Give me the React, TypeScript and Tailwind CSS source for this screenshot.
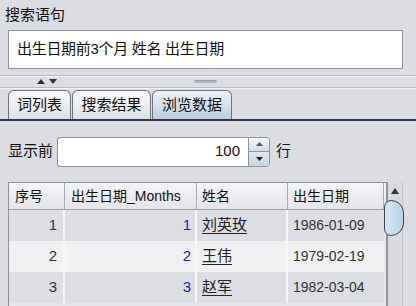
import React from "react";

const font = { fontFamily: '"Liberation Sans", "Noto Sans CJK SC", sans-serif' };

const rows = [
  { n: 1, m: 1, name: "刘英玫", date: "1986-01-09", bg: "bg-[#dcdee4]" },
  { n: 2, m: 2, name: "王伟", date: "1979-02-19", bg: "bg-[#f1f1f3]" },
  { n: 3, m: 3, name: "赵军", date: "1982-03-04", bg: "bg-[#dcdee4]" },
];

function Tab({ label, width, selected }: { label: string; width: number; selected?: boolean }) {
  return (
    <div
      className={
        "h-[29px] flex items-center justify-center border border-b-0 border-[#6f737c] rounded-t-[6px] text-[15px] text-[#111] " +
        (selected
          ? "bg-gradient-to-b from-[#eef3f8] to-[#bccfe0]"
          : "bg-gradient-to-b from-[#fafafb] to-[#dfe1e6]")
      }
      style={{ width }}
    >
      {label}
    </div>
  );
}

export default function App() {
  return (
    <div className="w-[416px] h-[306px] overflow-hidden bg-[#dcdde3] flex flex-col" style={font}>
      <div className="h-[30px] pl-[5px] pt-[5px] text-[15px] leading-[20px] text-[#111]">搜索语句</div>
      <div className="mx-[8px] mr-[13px] h-[39px] bg-white border border-[#8f9299] flex items-center pl-[8px] text-[15px] text-[#111] tracking-[-0.3px]">
        出生日期前3个月 姓名 出生日期
      </div>
      <div className="mt-[6px] h-[1px] bg-[#b9bbc2]" />
      <div className="h-[1px] bg-[#f3f3f5]" />
      <div className="h-[10px] relative">
        <div className="absolute left-[37px] top-[2px] flex gap-[4px]">
          <svg width="8" height="5" viewBox="0 0 8 5"><path d="M0 5 L4 0 L8 5 Z" fill="#333" /></svg>
          <svg width="8" height="5" viewBox="0 0 8 5"><path d="M0 0 L4 5 L8 0 Z" fill="#333" /></svg>
        </div>
        <div className="absolute left-[194px] top-[3px] w-[23px] h-[3px] rounded-[2px] bg-[#b5b7be] border-t border-[#9a9ca4]" />
      </div>
      <div className="h-[1px] bg-[#b9bbc2]" />
      <div className="h-[1px] bg-[#f3f3f5]" />
      <div className="mt-[1px] pl-[8px] flex gap-[1px]">
        <Tab label="词列表" width={63} />
        <Tab label="搜索结果" width={79} />
        <Tab label="浏览数据" width={80} selected />
      </div>
      <div className="h-[2px] bg-[#2f3a52]" />
      <div className="flex-1 flex flex-col">
        <div className="mt-[15px] h-[31px] flex items-center pl-[8px]">
          <span className="text-[15px] text-[#111] w-[49px]">显示前</span>
          <div className="w-[191px] h-[30px] bg-white border border-[#8f9299] border-r-0 rounded-l-[3px] flex items-center justify-end pr-[8px] text-[15px] text-[#111]">
            100
          </div>
          <div className="w-[22px] h-[30px] border border-[#8f9299] rounded-r-[4px] flex flex-col overflow-hidden">
            <div className="flex-1 flex items-center justify-center bg-gradient-to-b from-[#f4f7fa] to-[#d3dde7] border-b border-[#8f9299]">
              <svg width="7" height="4" viewBox="0 0 7 4"><path d="M0 4 L3.5 0 L7 4 Z" fill="#555" /></svg>
            </div>
            <div className="flex-1 flex items-center justify-center bg-gradient-to-b from-[#dfe7ef] to-[#c5d3e0]">
              <svg width="7" height="4" viewBox="0 0 7 4"><path d="M0 0 L3.5 4 L7 0 Z" fill="#222" /></svg>
            </div>
          </div>
          <span className="ml-[6px] text-[15px] text-[#111]">行</span>
        </div>
        <div className="mt-[15px] ml-[8px] flex flex-1">
          <div className="w-[379px] border border-[#8f9299] border-b-0 bg-[#e6e7ec] flex flex-col">
            <div className="flex h-[27px] bg-gradient-to-b from-[#f5f5f7] to-[#e4e5ea] border-b border-[#9fa2a9] text-[14px] text-[#111]">
              <div className="w-[56px] border-r border-[#a6a9b0] pl-[6px] flex items-center">序号</div>
              <div className="w-[132px] border-r border-[#a6a9b0] pl-[6px] flex items-center">出生日期_Months</div>
              <div className="w-[91px] border-r border-[#a6a9b0] pl-[5px] flex items-center">姓名</div>
              <div className="w-[96px] border-r border-[#a6a9b0] pl-[5px] flex items-center">出生日期</div>
            </div>
            {rows.map((r) => (
              <div key={r.n} className="flex h-[31px] text-[15px]">
                <div className={"w-[375px] flex " + r.bg}>
                  <div className="w-[56px] border-r-2 border-[#f7f7f9] pr-[6px] flex items-center justify-end text-[#333]">{r.n}</div>
                  <div className="w-[132px] border-r-2 border-[#f7f7f9] pr-[4px] flex items-center justify-end text-[#1d1dc0]">{r.m}</div>
                  <div className="w-[91px] border-r-2 border-[#f7f7f9] pl-[5px] flex items-center text-[#222]">
                    <span className="underline underline-offset-[3px]">{r.name}</span>
                  </div>
                  <div className="w-[96px] pl-[5px] flex items-center text-[#333] text-[14px]">{r.date}</div>
                </div>
              </div>
            ))}
          </div>
          <div className="w-[16px] border-l border-[#8f9299] border-r border-r-[#c4c6cc] bg-[#dadbe1] flex flex-col items-center relative">
            <div className="h-[18px] w-full flex items-center justify-center">
              <svg width="8" height="6" viewBox="0 0 8 6"><path d="M0 6 L4 0 L8 6 Z" fill="#333" /></svg>
            </div>
            <div className="absolute left-[-4px] top-[18px] w-[20px] h-[36px] rounded-r-[18px] rounded-l-[10px] border border-[#3b4150] bg-gradient-to-r from-[#d8e6f2] to-[#b9d2e8]" />
          </div>
        </div>
      </div>
    </div>
  );
}
